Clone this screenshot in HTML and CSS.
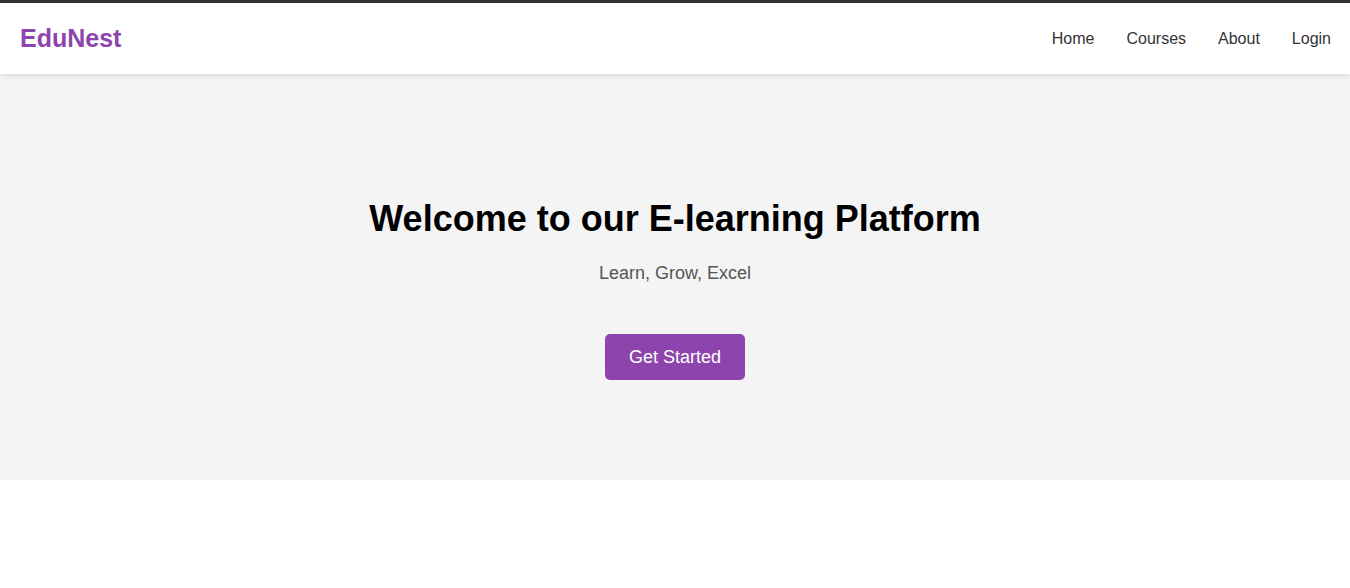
FILE: index.html
```html
<!DOCTYPE html>
<html lang="en">
<head>
<meta charset="utf-8">
<title>EduNest</title>
<link rel="stylesheet" href="styles.css">
</head>
<body>
<header class="site-header">
  <div class="logo">EduNest</div>
  <nav class="nav">
    <a href="#" class="nav-link">Home</a>
    <a href="#" class="nav-link">Courses</a>
    <a href="#" class="nav-link">About</a>
    <a href="#" class="nav-link">Login</a>
  </nav>
</header>
<section class="hero">
  <h1 class="hero-title">Welcome to our E-learning Platform</h1>
  <p class="hero-sub">Learn, Grow, Excel</p>
  <a href="#" class="btn">Get Started</a>
</section>
</body>
</html>
```
FILE: styles.css
```css
* { box-sizing: border-box; }
html, body { margin: 0; padding: 0; }
body {
  font-family: "Liberation Sans", Arial, sans-serif;
  background: #fff;
  color: #333;
  border-top: 3px solid #333;
}
.site-header {
  position: relative;
  z-index: 1;
  display: flex;
  align-items: center;
  justify-content: space-between;
  height: 71px;
  padding: 0 19px 0 20px;
  background: #fff;
  box-shadow: 0 2px 5px rgba(0,0,0,0.1);
}
.logo {
  font-size: 25px;
  font-weight: bold;
  color: #8e44ad;
}
.nav {
  display: flex;
  gap: 32px;
}
.nav-link {
  font-size: 16px;
  color: #333;
  text-decoration: none;
}
.hero {
  background: #f4f4f4;
  text-align: center;
  padding: 124px 20px 100px;
}
.hero-title {
  font-size: 36px;
  margin: 0 0 23px;
  color: #000;
}
.hero-sub {
  font-size: 18px;
  color: #555;
  margin: 0 0 50px;
}
.btn {
  display: inline-block;
  background: #8e44ad;
  color: #fff;
  font-size: 18px;
  line-height: 20px;
  padding: 13px 24px;
  border-radius: 5px;
  text-decoration: none;
}
```
